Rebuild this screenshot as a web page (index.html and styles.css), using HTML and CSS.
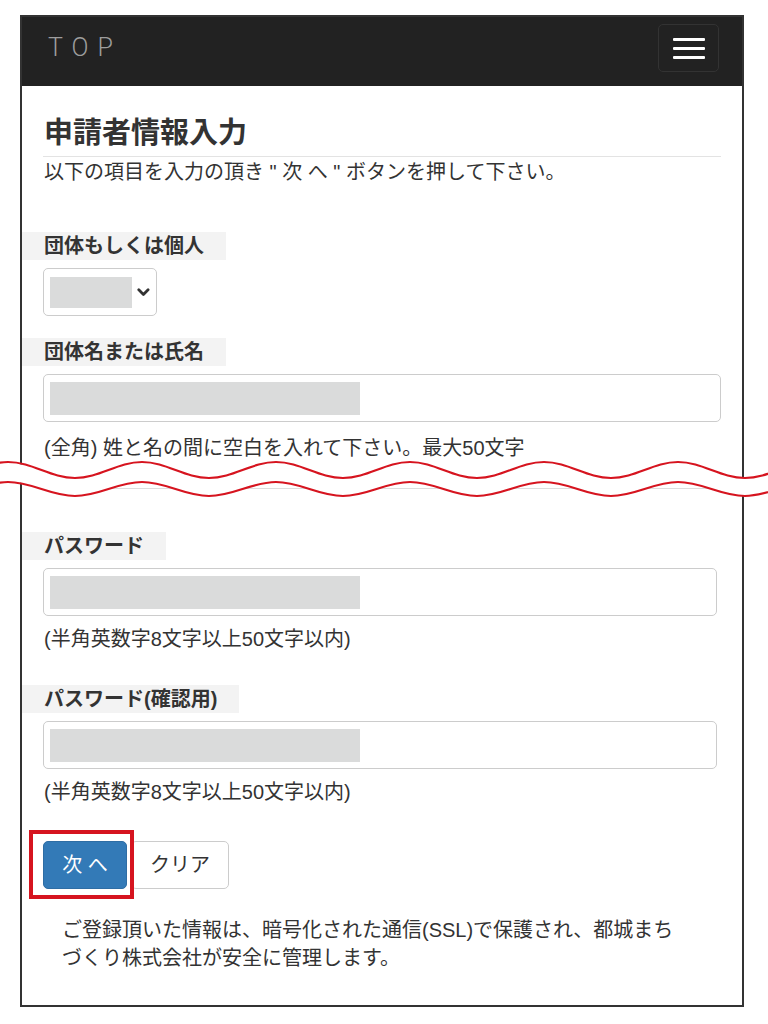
FILE: index.html
```html
<!DOCTYPE html>
<html lang="ja">
<head>
<meta charset="utf-8">
<title>申請者情報入力</title>
<link rel="stylesheet" href="styles.css">
</head>
<body>
<div class="frame">
  <header class="navbar">
    <span class="brand">TOP</span>
    <button class="toggle" type="button" aria-label="menu">
      <span class="bar"></span><span class="bar"></span><span class="bar"></span>
    </button>
  </header>
  <main class="content">
    <h1 class="title">申請者情報入力</h1>
    <p class="lead">以下の項目を入力の頂き " 次 へ " ボタンを押して下さい。</p>
    <form class="form">
      <div class="group group--first">
        <div class="label">団体もしくは個人</div>
        <div class="select">
          <span class="redact redact--select"></span>
          <svg class="chevron" width="13" height="9" viewBox="0 0 13 9"><path d="M1.8 1.8 6.5 6.5 11.2 1.8" fill="none" stroke="#333" stroke-width="2.8" stroke-linecap="round" stroke-linejoin="round"/></svg>
        </div>
      </div>
      <div class="group group--cut">
        <div class="label">団体名または氏名</div>
        <div class="input"><span class="redact"></span></div>
        <p class="help help--name">(全角) 姓と名の間に空白を入れて下さい。最大50文字</p>
      </div>
      <hr class="divider">
      <div class="group group--short">
        <div class="label">パスワード</div>
        <div class="input"><span class="redact"></span></div>
        <p class="help">(半角英数字8文字以上50文字以内)</p>
      </div>
      <div class="group group--short">
        <div class="label">パスワード(確認用)</div>
        <div class="input"><span class="redact"></span></div>
        <p class="help">(半角英数字8文字以上50文字以内)</p>
      </div>
      <div class="actions">
        <span class="btn-wrap">
          <button class="btn btn-primary" type="button">次 へ</button>
          <span class="highlight"></span>
        </span>
        <button class="btn btn-default" type="button">クリア</button>
      </div>
    </form>
    <p class="note">ご登録頂いた情報は、暗号化された通信(SSL)で保護され、都城まちづくり株式会社が安全に管理します。</p>
  </main>
</div>
<svg class="cut" width="768" height="45" viewBox="0 0 768 45" aria-hidden="true">
  <path d="M-126 17c24.4 0 42.6 15 67 15s42.6-15 67-15s42.6 15 67 15s42.6-15 67-15s42.6 15 67 15s42.6-15 67-15s42.6 15 67 15s42.6-15 67-15s42.6 15 67 15s42.6-15 67-15s42.6 15 67 15s42.6-15 67-15s42.6 15 67 15s42.6-15 67-15" fill="none" stroke="#fff" stroke-width="18"/>
  <path d="M-126 7c24.4 0 42.6 16 67 16s42.6-16 67-16s42.6 16 67 16s42.6-16 67-16s42.6 16 67 16s42.6-16 67-16s42.6 16 67 16s42.6-16 67-16s42.6 16 67 16s42.6-16 67-16s42.6 16 67 16s42.6-16 67-16s42.6 16 67 16s42.6-16 67-16" fill="none" stroke="#d6141f" stroke-width="2.2"/>
  <path d="M-126 27c24.4 0 42.6 14 67 14s42.6-14 67-14s42.6 14 67 14s42.6-14 67-14s42.6 14 67 14s42.6-14 67-14s42.6 14 67 14s42.6-14 67-14s42.6 14 67 14s42.6-14 67-14s42.6 14 67 14s42.6-14 67-14s42.6 14 67 14s42.6-14 67-14" fill="none" stroke="#d6141f" stroke-width="2.2"/>
</svg>
</body>
</html>
```

FILE: styles.css
```css
* { box-sizing: border-box; }

body {
  margin: 0;
  background: #fff;
  color: #333;
  font-family: "Liberation Sans", "Noto Sans CJK JP", sans-serif;
  font-size: 20px;
  line-height: 24px;
}

.frame {
  margin: 15px 0 0 20px;
  width: 724px;
  border: 2px solid #333;
  background: #fff;
}

/* navbar */
.navbar {
  height: 69px;
  background: #222;
  display: flex;
  justify-content: space-between;
  align-items: flex-start;
  padding: 7px 23px 0 26px;
}

.brand {
  font-family: Roboto, "Liberation Sans", sans-serif;
  font-weight: 300;
  font-size: 25px;
  line-height: 48px;
  letter-spacing: 9px;
  color: #9d9d9d;
}

.toggle {
  width: 61px;
  height: 48px;
  padding: 0;
  background: #222;
  border: 1px solid #333;
  border-radius: 5px;
  display: flex;
  flex-direction: column;
  align-items: center;
  justify-content: center;
  gap: 6px;
}

.bar {
  display: block;
  width: 32px;
  height: 3px;
  background: #fff;
  border-radius: 1px;
}

/* content */
.content {
  padding: 0 21px 33px;
}

.title {
  margin: 27px 0 0;
  padding: 0 0 8px 1px;
  font-family: "Noto Sans CJK JP", sans-serif;
  font-size: 29px;
  line-height: 35px;
  font-weight: 700;
  color: #333;
  border-bottom: 1px solid #e3e3e3;
}

.lead {
  margin: 3px 0 0 1px;
}

.form {
  margin-top: 48px;
}

.group {
  margin-bottom: 34px;
}

.group--first {
  margin-bottom: 22px;
}

.group--cut {
  margin-bottom: 0;
}

.label {
  display: inline-block;
  margin-left: -21px;
  padding: 2px 22px 2px 22px;
  background: #f3f3f3;
  font-weight: 700;
  line-height: 24px;
}

.select,
.input {
  margin-top: 8px;
  height: 48px;
  border: 1px solid #ccc;
  border-radius: 5px;
  background: #fff;
  padding: 7px 6px;
  display: flex;
  align-items: flex-start;
}

.select {
  width: 114px;
  align-items: center;
  gap: 4px;
}

.input {
  width: 100%;
}

.group--short .input {
  width: calc(100% - 4px);
}

.redact {
  display: block;
  width: 310px;
  height: 33px;
  background: #dadbdb;
}

.redact--select {
  width: 83px;
  height: 31px;
}

.chevron {
  display: block;
  margin-left: 1px;
}

.help {
  margin: 11px 0 0 1px;
  line-height: 24px;
}

.help--name {
  margin-top: 14px;
}

.divider {
  margin: 28px 0 43px;
  border: 0;
  border-top: 1px solid #ddd;
}

/* buttons */
.actions {
  margin-top: 37px;
  display: flex;
  gap: 4px;
}

.btn-wrap {
  position: relative;
  display: block;
}

.btn {
  height: 48px;
  padding: 0;
  font-family: "Liberation Sans", "Noto Sans CJK JP", sans-serif;
  font-size: 20px;
  line-height: 24px;
  border-radius: 5px;
  border: 1px solid #ccc;
  background: #fff;
  color: #333;
}

.btn-primary {
  width: 84px;
  background: #337ab7;
  border-color: #2e6da4;
  color: #fff;
}

.btn-default {
  width: 98px;
}

.highlight {
  position: absolute;
  left: -14px;
  top: -11px;
  right: -7px;
  bottom: -10px;
  border: 4px solid #d6141f;
  pointer-events: none;
}

.note {
  margin: 27px 0 0 19px;
  width: 622px;
  line-height: 28px;
}

/* cut mark overlay */
.cut {
  position: absolute;
  left: 0;
  top: 455px;
  display: block;
}
```
